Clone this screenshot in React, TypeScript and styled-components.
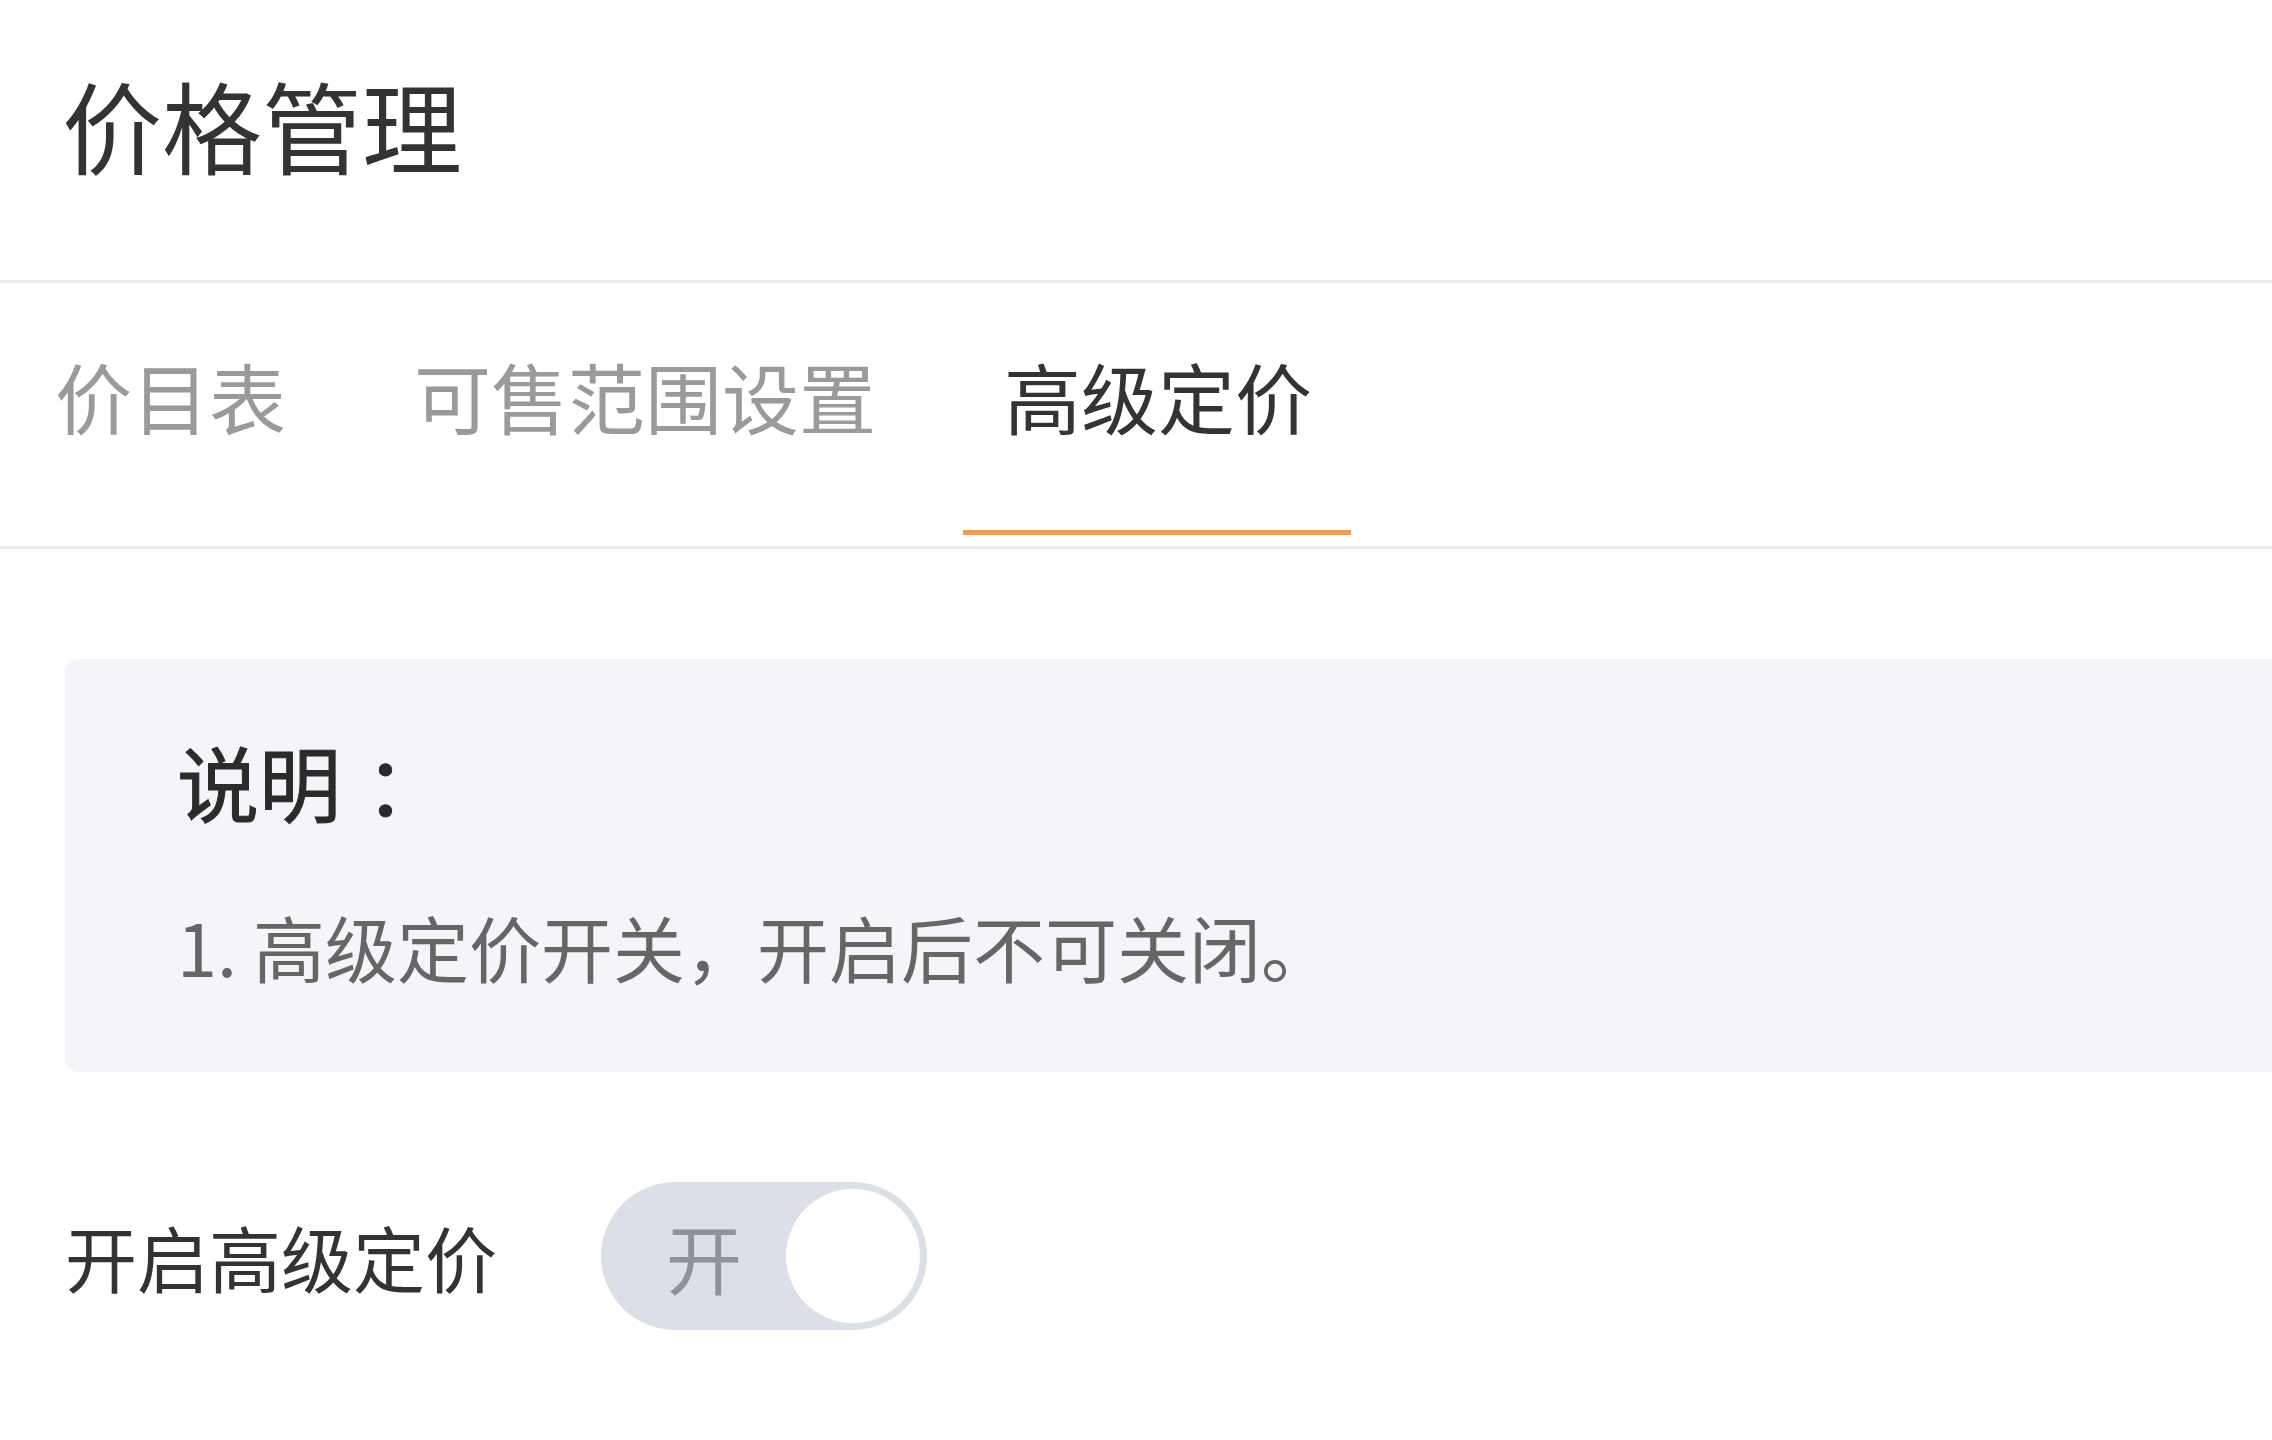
import React, { useState } from "react";
import styled, { createGlobalStyle } from "styled-components";

const GlobalStyle = createGlobalStyle`
  html, body {
    margin: 0;
    padding: 0;
    background: #fff;
    overflow: hidden;
  }
  body {
    font-family: "Noto Sans CJK SC", "Noto Sans", sans-serif;
    color: #333;
  }
`;

const tabs = ["价目表", "可售范围设置", "高级定价"];

const App = () => {
  const [activeTab, setActiveTab] = useState(2);
  const [enabled] = useState(true);

  return (
    <Page>
      <GlobalStyle />
      <Header>
        <Title>价格管理</Title>
      </Header>
      <TabBar>
        {tabs.map((label, idx) => (
          <Tab key={label} $active={idx === activeTab} onClick={() => setActiveTab(idx)}>
            {label}
            {idx === activeTab && <Indicator />}
          </Tab>
        ))}
      </TabBar>
      <Content>
        <Notice>
          <NoticeTitle>
            说明<Colon>：</Colon>
          </NoticeTitle>
          <NoticeText>1. 高级定价开关，开启后不可关闭。</NoticeText>
        </Notice>
        <FormRow>
          <FormLabel>开启高级定价</FormLabel>
          <Switch $on={enabled}>
            <SwitchText>开</SwitchText>
            <Knob />
          </Switch>
        </FormRow>
      </Content>
    </Page>
  );
};

export default App;

const Page = styled.div`
  width: 100%;
  min-height: 1440px;
`;

const Header = styled.div`
  height: 283px;
  padding-left: 62px;
  border-bottom: 3px solid #ececec;
  box-sizing: border-box;
  display: flex;
  align-items: flex-start;
`;

const Title = styled.h1`
  margin: 74px 0 0;
  font-size: 100px;
  line-height: 100px;
  font-weight: 400;
  color: #333;
`;

const TabBar = styled.div`
  display: flex;
  gap: 128px;
  padding-left: 55px;
  height: 263px;
  border-bottom: 3px solid #ececec;
`;

const Tab = styled.div<{ $active: boolean }>`
  position: relative;
  padding-top: 73px;
  font-size: 77px;
  line-height: 80px;
  color: ${(p) => (p.$active ? "#333" : "#9a9a9a")};
  cursor: pointer;
`;

const Indicator = styled.span`
  position: absolute;
  left: -41px;
  right: -39px;
  bottom: 11px;
  height: 5px;
  background: #f89b4f;
`;

const Content = styled.div`
  padding: 110px 0 0 65px;
`;

const Notice = styled.div`
  height: 413px;
  margin-right: -40px;
  box-sizing: border-box;
  padding: 80px 0 0 112px;
  background: #f4f5f9;
  border-radius: 14px;
`;

const NoticeTitle = styled.div`
  font-size: 82px;
  line-height: 84px;
  font-weight: 400;
  color: #2b2b2b;
  -webkit-text-stroke: 1px #2b2b2b;
`;

const Colon = styled.span`
  display: inline-block;
  margin-left: 24px;
`;

const NoticeText = styled.div`
  margin-top: 86px;
  font-size: 72px;
  line-height: 74px;
  color: #666;
`;

const FormRow = styled.div`
  display: flex;
  align-items: center;
  margin-top: 110px;
`;

const FormLabel = styled.div`
  width: 536px;
  font-size: 72px;
  line-height: 80px;
  color: #333;
`;

const Switch = styled.div<{ $on: boolean }>`
  width: 326px;
  height: 148px;
  border-radius: 74px;
  background: #dcdfe6;
  box-sizing: border-box;
  padding: 7px;
  display: flex;
  align-items: center;
  justify-content: space-between;
`;

const SwitchText = styled.span`
  padding-left: 58px;
  font-size: 76px;
  line-height: 80px;
  color: #8d929c;
`;

const Knob = styled.span`
  width: 134px;
  height: 134px;
  border-radius: 50%;
  background: #fff;
`;
